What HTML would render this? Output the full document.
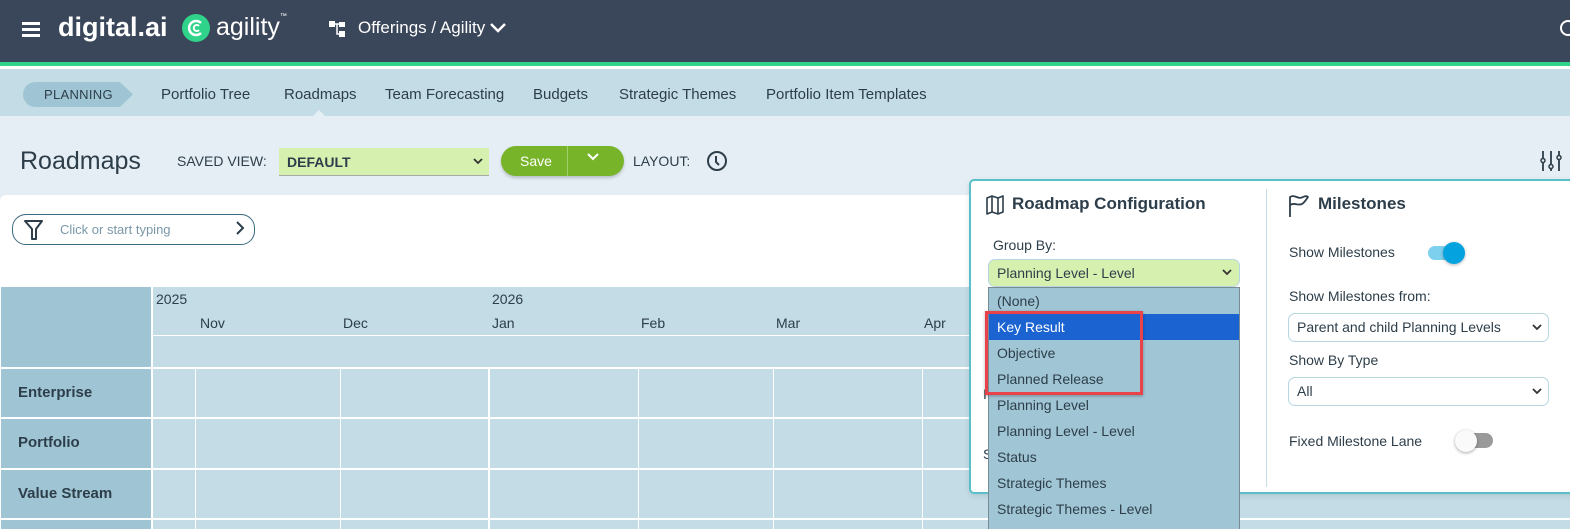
<!DOCTYPE html>
<html><head><meta charset="utf-8"><style>
*{box-sizing:border-box;margin:0;padding:0}
html{overflow:hidden}
body{width:1570px;height:529px;overflow:hidden;position:relative;font-family:"Liberation Sans",sans-serif;background:#e5eef4;color:#2d3e4a}
.a{position:absolute}
.top{left:0;top:0;width:1570px;height:62px;background:#3a4659}
.gl{left:0;top:62px;width:1570px;height:4px;background:#2fd38a}
.wl{left:0;top:66px;width:1570px;height:3px;background:#fff}
.nav{left:0;top:69px;width:1570px;height:47px;background:#c3dce5}
.nav span{position:absolute;top:17px;font-size:15px;color:#2d3e4a}
.white{left:0;top:195px;width:1570px;height:334px;background:#fff;border-radius:6px 0 0 0}
.lc{background:#9fc5d4}
.tc{background:#c3dce5}
.hl{background:#fff;height:2px}
.vl{background:#fff;width:2px}
.rl{font-weight:bold;font-size:15px;color:#2d3e4a;left:18px}
.mo{font-size:14px;top:315px}
.panel{left:969px;top:179px;width:610px;height:315px;background:#fff;border:2px solid #5bbfc9;border-radius:5px;box-shadow:0 2px 6px rgba(0,0,0,.1)}
.dd{left:988px;top:287px;width:252px;height:242px;background:#a0c5d4;border:1px solid #7a8a92;border-bottom:none;overflow:hidden}
.dd div{height:26px;line-height:26px;padding-left:8px;font-size:14px;color:#2d3e4a}
.sel{border:1px solid #b7d7e0;border-radius:7px;background:#fff;height:29px;font-size:14px;padding-left:8px;line-height:27px}
</style></head><body>
<div class="a top"></div>
<div class="a gl"></div><div class="a wl"></div>
<div class="a" style="left:22px;top:22px;width:18px;height:3px;background:#fff;box-shadow:0 6px 0 #fff,0 12px 0 #fff"></div>
<div class="a" style="left:58px;top:12px;font-size:27px;font-weight:bold;color:#fff;letter-spacing:0px">digital.ai</div>
<div class="a" style="left:182px;top:14px;width:28px;height:28px;border-radius:50%;background:#2fd38a"></div>
<svg class="a" style="left:182px;top:14px" width="28" height="28"><path d="M19 9a7 7 0 1 0 0 10" stroke="#fff" stroke-width="2.5" fill="none"/><path d="M17 12a3 3 0 1 0 0 4" stroke="#fff" stroke-width="2" fill="none"/></svg>
<div class="a" style="left:216px;top:13px;font-size:25px;color:#fff">agility<span style="font-size:7px;vertical-align:top">™</span></div>
<svg class="a" style="left:329px;top:20px" width="18" height="18"><rect x="0" y="1" width="6" height="6" fill="#fff"/><rect x="10" y="2" width="6" height="5" fill="#fff"/><rect x="10" y="11" width="6" height="6" fill="#fff"/><path d="M6 4h4M8 4v10h2" stroke="#fff" fill="none" stroke-width="1.5"/></svg>
<div class="a" style="left:358px;top:18px;font-size:17px;color:#fff">Offerings / Agility</div>
<svg class="a" style="left:489px;top:22px" width="18" height="12"><path d="M2 2l7 7 7-7" stroke="#fff" stroke-width="2.5" fill="none"/></svg>
<div class="a" style="left:1560px;top:20px;width:16px;height:16px;border:2.5px solid #fff;border-radius:50%"></div>

<div class="a nav">
<div class="a" style="left:23px;top:13px;width:110px;height:25px;background:#9fc5d4;border-radius:13px 0 0 13px;clip-path:polygon(0 0,88% 0,100% 50%,88% 100%,0 100%)"></div>
<span style="left:44px;top:18px;font-size:13px;letter-spacing:.3px">PLANNING</span>
<span style="left:161px">Portfolio Tree</span>
<span style="left:284px">Roadmaps</span>
<span style="left:385px">Team Forecasting</span>
<span style="left:533px">Budgets</span>
<span style="left:619px">Strategic Themes</span>
<span style="left:766px">Portfolio Item Templates</span>
<div class="a" style="left:313px;top:41px;width:0;height:0;border-left:6px solid transparent;border-right:6px solid transparent;border-bottom:6px solid #e5eef4"></div>
</div>

<div class="a" style="left:20px;top:147px;font-size:25px;color:#2d3e4a">Roadmaps</div>
<div class="a" style="left:177px;top:153px;font-size:14px">SAVED VIEW:</div>
<div class="a" style="left:279px;top:148px;width:210px;height:28px;background:#d6f0b0;border-bottom:1px solid #aaa;font-size:14px;font-weight:bold;padding:6px 8px">DEFAULT</div>
<svg class="a" style="left:473px;top:158px" width="10" height="8"><path d="M1 1l4 4 4-4" stroke="#333" stroke-width="1.8" fill="none"/></svg>
<div class="a" style="left:501px;top:146px;width:123px;height:30px;background:#78b42a;border-radius:15px;box-shadow:0 2px 3px rgba(0,0,0,.2)"></div>
<div class="a" style="left:567px;top:146px;width:1px;height:30px;background:#9fd06a"></div>
<div class="a" style="left:520px;top:153px;font-size:14px;color:#fff">Save</div>
<svg class="a" style="left:586px;top:153px" width="14" height="9"><path d="M2 1l5 5 5-5" stroke="#fff" stroke-width="2" fill="none"/></svg>
<div class="a" style="left:633px;top:153px;font-size:14px">LAYOUT:</div>
<svg class="a" style="left:706px;top:150px" width="22" height="22"><circle cx="11" cy="11" r="9" stroke="#2d3e4a" stroke-width="2" fill="none"/><path d="M10 6v6l3 3" stroke="#2d3e4a" stroke-width="2" fill="none"/></svg>
<svg class="a" style="left:1540px;top:150px" width="22" height="22"><path d="M3 1v7M3 13v8M11 1v13M11 19v2M19 1v4M19 10v11" stroke="#2d3e4a" stroke-width="1.8"/><circle cx="3" cy="10.5" r="2" stroke="#2d3e4a" fill="none" stroke-width="1.5"/><circle cx="11" cy="16.5" r="2" stroke="#2d3e4a" fill="none" stroke-width="1.5"/><circle cx="19" cy="7.5" r="2" stroke="#2d3e4a" fill="none" stroke-width="1.5"/></svg>

<div class="a white"></div>
<div class="a" style="left:12px;top:214px;width:243px;height:31px;border:1.5px solid #3c6a80;border-radius:14px"></div>
<svg class="a" style="left:24px;top:219px" width="20" height="22"><path d="M1 2h17l-6 8v10h-4V10z" stroke="#2d3e4a" stroke-width="2" fill="none" stroke-linejoin="round"/></svg>
<div class="a" style="left:60px;top:222px;font-size:13px;color:#7a98a8">Click or start typing</div>
<svg class="a" style="left:235px;top:221px" width="10" height="14"><path d="M2 1l6 6-6 6" stroke="#2d3e4a" stroke-width="2" fill="none"/></svg>

<div class="a lc" style="left:1px;top:287px;width:151px;height:242px"></div>
<div class="a tc" style="left:153px;top:287px;width:1417px;height:242px"></div>
<div class="a vl" style="left:151px;top:287px;height:242px"></div>
<div class="a" style="left:156px;top:291px;font-size:14px">2025</div>
<div class="a" style="left:492px;top:291px;font-size:14px">2026</div>
<div class="a mo" style="left:200px">Nov</div>
<div class="a mo" style="left:343px">Dec</div>
<div class="a mo" style="left:492px">Jan</div>
<div class="a mo" style="left:641px">Feb</div>
<div class="a mo" style="left:776px">Mar</div>
<div class="a mo" style="left:924px">Apr</div>
<div class="a hl" style="left:153px;top:335px;width:1417px;height:1px"></div>
<div class="a hl" style="left:0;top:367px;width:1570px"></div>
<div class="a hl" style="left:0;top:417px;width:1570px"></div>
<div class="a hl" style="left:0;top:468px;width:1570px"></div>
<div class="a hl" style="left:0;top:518px;width:1570px"></div>
<div class="a vl" style="left:195px;top:368px;height:161px;width:1px"></div>
<div class="a vl" style="left:340px;top:368px;height:161px;width:1px"></div>
<div class="a vl" style="left:488px;top:368px;height:161px"></div>
<div class="a vl" style="left:638px;top:368px;height:161px;width:1px"></div>
<div class="a vl" style="left:773px;top:368px;height:161px;width:1px"></div>
<div class="a vl" style="left:922px;top:368px;height:161px;width:1px"></div>
<div class="a rl" style="top:384px">Enterprise</div>
<div class="a rl" style="top:434px">Portfolio</div>
<div class="a rl" style="top:485px">Value Stream</div>

<div class="a panel"></div>
<div class="a" style="left:1266px;top:189px;width:1px;height:298px;background:#c5dde5"></div>
<svg class="a" style="left:986px;top:195px" width="18" height="20"><path d="M1 3l5-2 6 2 5-2v16l-5 2-6-2-5 2z M6 1v16M12 3v16" stroke="#2d3e4a" stroke-width="1.6" fill="none" stroke-linejoin="round"/></svg>
<div class="a" style="left:1012px;top:194px;font-size:17px;font-weight:bold">Roadmap Configuration</div>
<svg class="a" style="left:1288px;top:194px" width="22" height="24"><path d="M2 23V3c5-3 8 3 13 0 2-1 4-1 5 0-2 3-4 6-6 7-5 2-7-2-12 1" stroke="#2d3e4a" stroke-width="1.8" fill="none" stroke-linejoin="round"/></svg>
<div class="a" style="left:1318px;top:194px;font-size:17px;font-weight:bold">Milestones</div>
<div class="a" style="left:993px;top:237px;font-size:14px">Group By:</div>
<div class="a" style="left:988px;top:259px;width:252px;height:28px;background:#d6f0b0;border:1px solid #b7d7e0;border-radius:7px;font-size:14px;padding:5px 8px">Planning Level - Level</div>
<svg class="a" style="left:1222px;top:269px" width="10" height="8"><path d="M1 1l4 4 4-4" stroke="#333" stroke-width="1.8" fill="none"/></svg>
<div class="a" style="left:983px;top:386px;font-size:14px">I</div>
<div class="a" style="left:983px;top:446px;font-size:14px">S</div>
<div class="a dd">
<div>(None)</div>
<div style="background:#1a63d1;color:#fff">Key Result</div>
<div>Objective</div>
<div>Planned Release</div>
<div>Planning Level</div>
<div>Planning Level - Level</div>
<div>Status</div>
<div>Strategic Themes</div>
<div>Strategic Themes - Level</div>
</div>
<div class="a" style="left:985px;top:311px;width:158px;height:84px;border:3px solid #e8424a;box-shadow:0 1px 3px rgba(0,0,0,.3)"></div>

<div class="a" style="left:1289px;top:244px;font-size:14px">Show Milestones</div>
<div class="a" style="left:1428px;top:246px;width:32px;height:14px;border-radius:7px;background:#7dd0ee"></div>
<div class="a" style="left:1443px;top:242px;width:22px;height:22px;border-radius:50%;background:#04a3e0;box-shadow:0 1px 3px rgba(0,0,0,.3)"></div>
<div class="a" style="left:1289px;top:288px;font-size:14px">Show Milestones from:</div>
<div class="a sel" style="left:1288px;top:313px;width:261px">Parent and child Planning Levels</div>
<svg class="a" style="left:1532px;top:324px" width="10" height="8"><path d="M1 1l4 4 4-4" stroke="#333" stroke-width="1.8" fill="none"/></svg>
<div class="a" style="left:1289px;top:352px;font-size:14px">Show By Type</div>
<div class="a sel" style="left:1288px;top:377px;width:261px">All</div>
<svg class="a" style="left:1532px;top:388px" width="10" height="8"><path d="M1 1l4 4 4-4" stroke="#333" stroke-width="1.8" fill="none"/></svg>
<div class="a" style="left:1289px;top:433px;font-size:14px">Fixed Milestone Lane</div>
<div class="a" style="left:1461px;top:433px;width:32px;height:15px;border-radius:8px;background:#9a9a9a"></div>
<div class="a" style="left:1455px;top:430px;width:22px;height:22px;border-radius:50%;background:#fafafa;box-shadow:0 1px 3px rgba(0,0,0,.35)"></div>
</body></html>
